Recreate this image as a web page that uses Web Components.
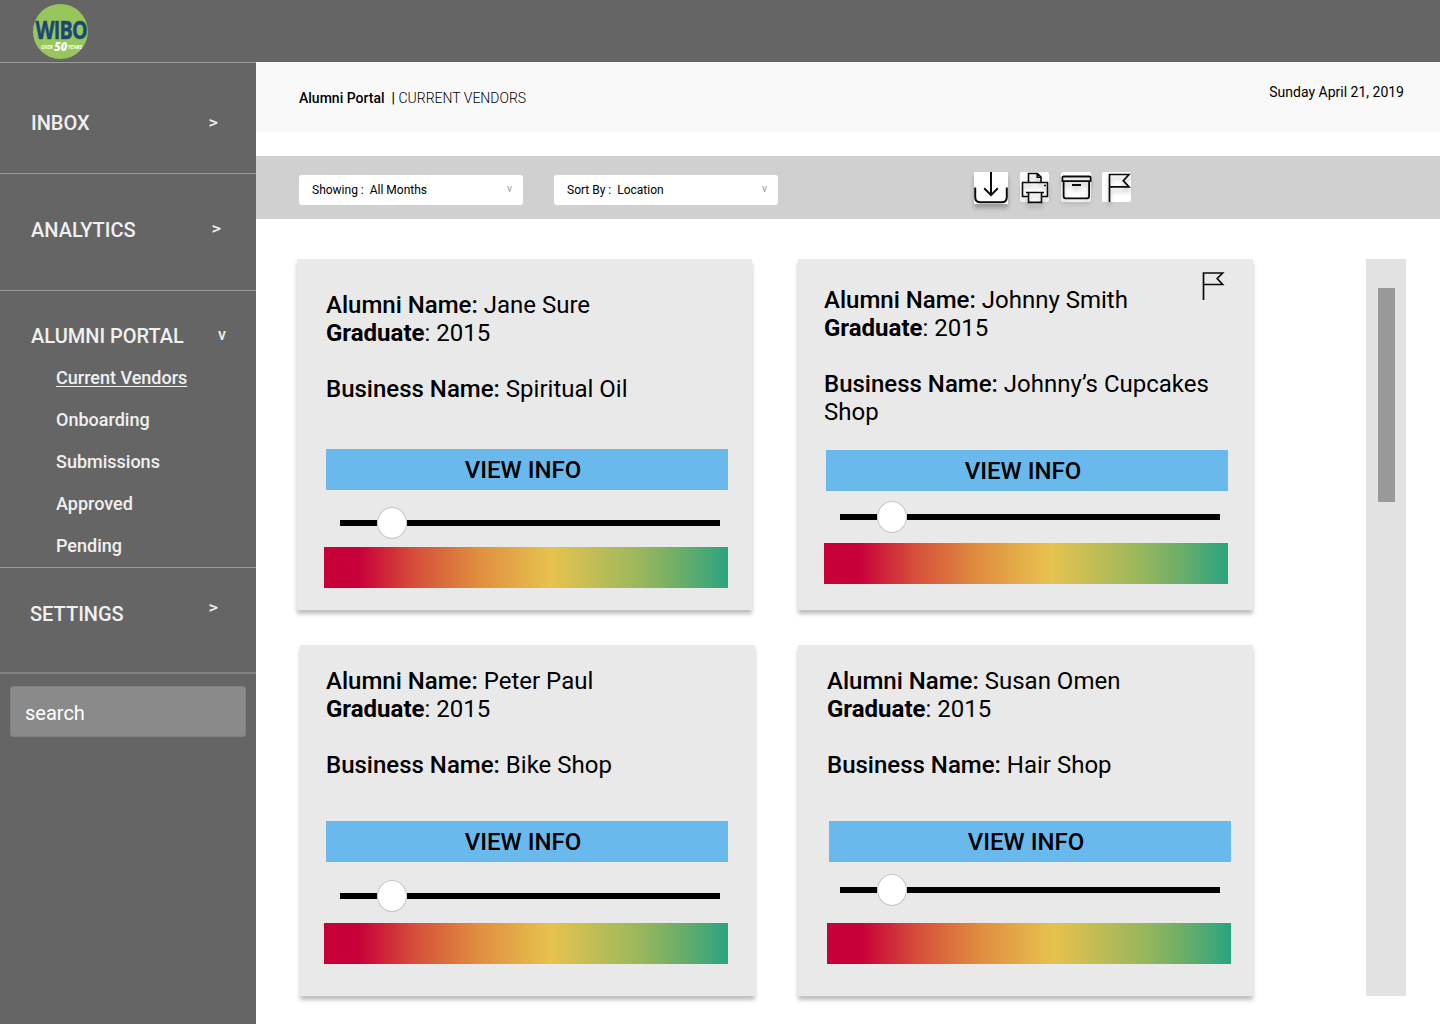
<!DOCTYPE html>
<html lang="en">
<head>
<meta charset="utf-8">
<title>Alumni Portal</title>
<style>
  body { margin: 0; font-family: Roboto, "Liberation Sans", sans-serif; background: #fff; color: #000; }
</style>
</head>
<body>
<portal-app></portal-app>
<script>
const define = (name, html, init) => {
  const tpl = document.createElement('template');
  tpl.innerHTML = html;
  customElements.define(name, class extends HTMLElement {
    constructor() {
      super();
      this.attachShadow({ mode: 'open' }).append(tpl.content.cloneNode(true));
    }
    connectedCallback() { if (init) init(this, this.shadowRoot); }
  });
};

define('wibo-logo', `
<style>:host{display:block;width:70px;height:62px} svg{display:block;overflow:visible}</style>
<svg width="70" height="62" viewBox="30 0 70 62">
  <circle cx="60.4" cy="31.5" r="27.5" fill="#97c65c"/>
  <g transform="translate(35.6 39) scale(.77 1)"><text font-family="Open Sans" font-weight="700" font-size="25.6" letter-spacing="-1" fill="#1c4675" stroke="#1c4675" stroke-width=".5">WIBO</text></g>
  <g fill="#fff" font-family="Open Sans" font-style="italic" font-weight="700">
    <text x="41" y="49" font-size="4.7">OVER</text>
    <g transform="translate(54.3 51.4) scale(.94 1)"><text font-size="11.8" font-weight="800">50</text></g>
    <text x="68" y="49" font-size="4.9">YEARS</text>
  </g>
</svg>`);

define('nav-section', `
<style>
  :host{display:block;box-sizing:border-box;color:#f0f0f0;border-top:1px solid #9b9b9b}
  .head{display:flex;justify-content:space-between;font-weight:500;font-size:20px;line-height:23px}
  .mark{font-size:16px;line-height:19px;margin-top:var(--mark-top,0px)}
  :host([mark=">"]) .mark{transform:scaleX(1.15)}
</style>
<div class="head"><span class="label"></span><span class="mark"></span></div><slot></slot>`,
(el, root) => {
  root.querySelector('.label').textContent = el.getAttribute('label');
  root.querySelector('.mark').textContent = el.getAttribute('mark');
});

define('nav-link', `
<style>
  :host{display:block;font-size:18px;font-weight:500;line-height:21px;margin:0 0 21px 25px}
  :host([current]) span{text-decoration:underline;text-decoration-thickness:1px;text-underline-offset:2px}
</style><span><slot></slot></span>`);

define('search-box', `
<style>:host{display:flex;align-items:center;box-sizing:border-box;height:51px;margin:12px 10px 0;padding:2px 14px 0;background:#8a8a8a;border:1px solid #818181;border-radius:3px;color:#fff;font-size:20px}</style>
<slot></slot>`);

define('side-nav', `
<style>
  :host{display:block;background:#656565;box-sizing:border-box;width:256px;height:962px}
  .inbox{height:111px;padding:49px 39px 0 31px}
  .analytics{height:117px;padding:45px 36px 0 31px}
  .alumni{height:277px;padding:34px 30px 0 31px}
  .settings{height:105px;padding:35px 39px 0 30px}
  .find{border-top:2px solid #828282}
  .links{padding-top:19px}
</style>
<nav-section class="inbox" label="INBOX" mark=">" style="--mark-top:1px"></nav-section>
<nav-section class="analytics" label="ANALYTICS" mark=">" style="--mark-top:0px"></nav-section>
<nav-section class="alumni" label="ALUMNI PORTAL" mark="v"  style="--mark-top:0px">
  <div class="links">
    <nav-link current>Current Vendors</nav-link>
    <nav-link>Onboarding</nav-link>
    <nav-link>Submissions</nav-link>
    <nav-link>Approved</nav-link>
    <nav-link>Pending</nav-link>
  </div>
</nav-section>
<nav-section class="settings" label="SETTINGS" mark=">" style="--mark-top:-5px"></nav-section>
<div class="find"><search-box>search</search-box></div>`);

define('page-heading', `
<style>
  :host{display:flex;justify-content:space-between;box-sizing:border-box;height:70px;background:#f9f9f9;font-size:14px;line-height:16px;padding:0 36px 0 43px}
  .crumb{margin-top:28px;white-space:pre}
  b{font-weight:500} .sub{font-weight:300}
  .date{margin-top:22px}
</style>
<div class="crumb"><b>Alumni Portal  | </b><span class="sub">CURRENT VENDORS</span></div>
<div class="date">Sunday April 21, 2019</div>`);

define('filter-select', `
<style>
  :host{display:flex;align-items:center;justify-content:space-between;box-sizing:border-box;width:224px;height:30px;background:#fff;border-radius:3px;padding:0 11px 0 13px;font-size:12px;white-space:pre}
  i{font-style:normal;color:#999;font-size:10.5px;line-height:14px;margin-top:-2px}
</style><span><slot></slot></span><i>v</i>`);

const shapes = {
  download: [34, 32, 0, 'M1.2 15.5V25Q1.2 30.3 6.5 30.3H27.5Q32.8 30.3 32.8 25V15.5M17 0V23M10.2 16.3L17 23.2L23.8 16.3', 2],
  print: [29, 30, 2, 'M8.5 10.5V1.5H17.5L21 5V10.5M17.2 1.5V5.3H21M8.5 24.5H2.5V10.5H27.5V24.5H21.5M6 20.5H24M8.5 20.5V30.4H21.5V20.5M24 13.5H26', 1.6],
  archive: [30, 30, 2, 'M2.5 4.5H28.5Q29.6 4.5 29.6 5.6V9.2H1.4V5.6Q1.4 4.5 2.5 4.5ZM2.6 9.5V24.3Q2.6 26.3 4.6 26.3H26.1Q28.1 26.3 28.1 24.3V9.5M11 13H20', 1.8],
  flag: [29, 30, 2, 'M7.5 30V2.5H27L21.3 8.7L27 14.9H7.5', 1.7],
  mark: [24, 30, null, 'M2.5 29V2H21.6L16.2 7.5L21.6 13.5H2.5', 1.7]
};
define('line-icon', `<style>:host{display:block} svg{display:block;overflow:visible} .shadow{filter:drop-shadow(0 4px 2px rgba(0,0,0,.25))}</style><div></div>`,
(el, root) => {
  const [w, h, r, d, sw] = shapes[el.getAttribute('kind')];
  const bg = r === null ? '' : `<rect width="${w}" height="${h}" rx="${r}" fill="#fff"/>`;
  const square = el.getAttribute('kind') === 'download';
  root.querySelector('div').innerHTML = `<svg width="${w}" height="${h}" ${square ? 'class="shadow"' : ''}>${bg}<path ${r === 2 ? 'class="shadow"' : ''} d="${d}" fill="none" stroke="#0b0b0b" stroke-width="${sw}"/></svg>`;
});

define('tool-bar', `
<style>
  :host{display:flex;align-items:flex-start;box-sizing:border-box;height:63px;background:#d0d0d0;margin-top:24px;padding-left:43px}
  filter-select{margin:19px 31px 0 0}
  .icons{display:flex;margin:16px 0 0 165px;gap:12px}
  .icons line-icon + line-icon + line-icon{margin-right:-1px}
</style>
<filter-select>Showing :  All Months</filter-select>
<filter-select>Sort By :  Location</filter-select>
<div class="icons"><line-icon kind="download"></line-icon><line-icon kind="print"></line-icon><line-icon kind="archive"></line-icon><line-icon kind="flag"></line-icon></div>`);

define('progress-slider', `
<style>
  :host{display:flex;align-items:center;width:380px;height:32px}
  .before{width:37px}.after{flex:1}.before,.after{height:6px;background:#000}
  .thumb{box-sizing:border-box;width:30px;height:32px;border-radius:50%;background:#fff;border:1px solid #c4c4c4}
</style>
<div class="before"></div><div class="thumb"></div><div class="after"></div>`);

define('vendor-card', `
<style>
  :host{display:block;position:relative;box-sizing:border-box;width:455px;height:351px;background:#e9e9e9;box-shadow:0 4px 4px rgba(0,0,0,.25)}
  .text{box-sizing:border-box;font-size:24px;line-height:28px;padding:var(--text-top) 30px 0 var(--text-left);height:var(--text-height)}
  .medium{font-weight:500}.bold{font-weight:700}
  p{margin:0}.business{margin-top:28px}
  .button{display:flex;align-items:center;justify-content:center;box-sizing:border-box;width:402px;height:41px;padding-right:8px;margin-left:var(--button-left);background:#69b9ed;font-size:24px;font-weight:500;line-height:28px}
  progress-slider{margin:var(--slider-top) 0 0 var(--slider-left)}
  .scale{width:404px;height:41px;margin:var(--scale-top) 0 0 var(--scale-left);background:linear-gradient(90deg,#c80039 0,#c80039 8.5%,#d7513b 23%,#e08d40 38%,#e7c24e 56%,#9ab75c 78%,#6dae68 88%,#2aa47f 100%)}
  line-icon{position:absolute;right:28px;top:12px}
</style>
<div class="text">
  <p><span class="medium">Alumni Name:</span> <span class="name"></span></p>
  <p><span class="bold">Graduate</span>: <span class="year"></span></p>
  <p class="business"><span class="medium">Business Name:</span> <span class="shop"></span></p>
</div>
<div class="button">VIEW INFO</div>
<progress-slider></progress-slider>
<div class="scale"></div>`,
(el, root) => {
  for (const key of ['name', 'year', 'shop']) root.querySelector('.' + key).textContent = el.getAttribute(key);
  if (el.hasAttribute('flagged')) {
    const icon = document.createElement('line-icon');
    icon.setAttribute('kind', 'mark');
    root.append(icon);
  }
});

define('scroll-rail', `
<style>:host{display:block;box-sizing:border-box;width:40px;height:737px;background:#e2e2e2;padding:29px 11px 0 12px} div{height:214px;background:#999}</style><div></div>`);

define('portal-app', `
<style>
  :host{display:flex;flex-direction:column;width:1440px;height:1024px;overflow:hidden}
  header{height:62px;background:#656565;padding-left:30px}
  .body{display:flex}
  main{flex:1}
  .content{display:flex;justify-content:space-between;padding:40px 34px 0 41px}
  .rows{display:flex;flex-direction:column;gap:35px}
  .row{display:flex}
  .a{--text-top:32px;--text-left:29px;--text-height:190px;--button-left:29px;--slider-top:17px;--slider-left:43px;--scale-top:8px;--scale-left:27px;margin-right:46px}
  .b{--text-top:27px;--text-left:26px;--text-height:191px;--button-left:28px;--slider-top:10px;--slider-left:42px;--scale-top:10px;--scale-left:26px}
  .c{--text-top:22px;--text-left:26px;--text-height:176px;--button-left:26px;--slider-top:18px;--slider-left:40px;--scale-top:11px;--scale-left:24px;margin-left:3px;margin-right:43px}
  .d{--text-top:22px;--text-left:29px;--text-height:176px;--button-left:31px;--slider-top:12px;--slider-left:42px;--scale-top:17px;--scale-left:29px}
</style>
<header><wibo-logo></wibo-logo></header>
<div class="body">
  <side-nav></side-nav>
  <main>
    <page-heading></page-heading>
    <tool-bar></tool-bar>
    <div class="content">
      <div class="rows">
        <div class="row">
          <vendor-card class="a" name="Jane Sure" year="2015" shop="Spiritual Oil"></vendor-card>
          <vendor-card class="b" name="Johnny Smith" year="2015" shop="Johnny’s Cupcakes Shop" flagged></vendor-card>
        </div>
        <div class="row">
          <vendor-card class="c" name="Peter Paul" year="2015" shop="Bike Shop"></vendor-card>
          <vendor-card class="d" name="Susan Omen" year="2015" shop="Hair Shop"></vendor-card>
        </div>
      </div>
      <scroll-rail></scroll-rail>
    </div>
  </main>
</div>`);
</script>
</body>
</html>
